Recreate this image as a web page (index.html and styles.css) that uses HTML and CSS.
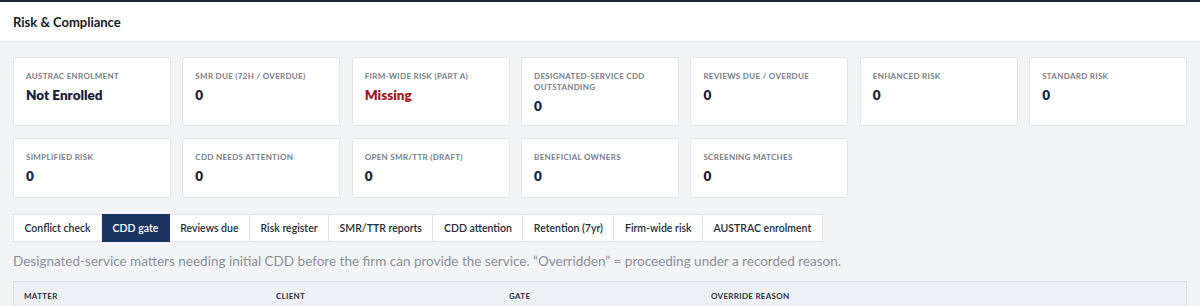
FILE: index.html
```html
<!DOCTYPE html>
<html lang="en">
<head>
    <meta charset="UTF-8">
    <meta name="viewport" content="width=device-width, initial-scale=1.0">
    <title>Risk &amp; Compliance</title>
    <link rel="stylesheet" href="styles.css">
</head>
<body>

<div class="page-header">
    <h1>Risk &amp; Compliance</h1>
</div>

<div class="content">
    <div class="stats">
        <div class="stat-card">
            <div class="stat-label">AUSTRAC enrolment</div>
            <div class="stat-value">Not Enrolled</div>
        </div>
        <div class="stat-card">
            <div class="stat-label">SMR due (72h / overdue)</div>
            <div class="stat-value">0</div>
        </div>
        <div class="stat-card">
            <div class="stat-label">Firm-wide risk (Part A)</div>
            <div class="stat-value danger">Missing</div>
        </div>
        <div class="stat-card">
            <div class="stat-label">Designated-service CDD outstanding</div>
            <div class="stat-value">0</div>
        </div>
        <div class="stat-card">
            <div class="stat-label">Reviews due / overdue</div>
            <div class="stat-value">0</div>
        </div>
        <div class="stat-card">
            <div class="stat-label">Enhanced risk</div>
            <div class="stat-value">0</div>
        </div>
        <div class="stat-card">
            <div class="stat-label">Standard risk</div>
            <div class="stat-value">0</div>
        </div>
        <div class="stat-card short">
            <div class="stat-label">Simplified risk</div>
            <div class="stat-value">0</div>
        </div>
        <div class="stat-card short">
            <div class="stat-label">CDD needs attention</div>
            <div class="stat-value">0</div>
        </div>
        <div class="stat-card short">
            <div class="stat-label">Open SMR/TTR (draft)</div>
            <div class="stat-value">0</div>
        </div>
        <div class="stat-card short">
            <div class="stat-label">Beneficial owners</div>
            <div class="stat-value">0</div>
        </div>
        <div class="stat-card short">
            <div class="stat-label">Screening matches</div>
            <div class="stat-value">0</div>
        </div>
    </div>

    <div class="tabs">
        <button class="tab">Conflict check</button>
        <button class="tab active">CDD gate</button>
        <button class="tab">Reviews due</button>
        <button class="tab">Risk register</button>
        <button class="tab">SMR/TTR reports</button>
        <button class="tab">CDD attention</button>
        <button class="tab">Retention (7yr)</button>
        <button class="tab">Firm-wide risk</button>
        <button class="tab">AUSTRAC enrolment</button>
    </div>

    <p class="hint">Designated-service matters needing initial CDD before the firm can provide the service. &ldquo;Overridden&rdquo; = proceeding under a recorded reason.</p>

    <table class="gate-table">
        <thead>
            <tr>
                <th class="col-matter">Matter</th>
                <th class="col-client">Client</th>
                <th class="col-gate">Gate</th>
                <th>Override reason</th>
            </tr>
        </thead>
    </table>
</div>

</body>
</html>
```

FILE: styles.css
```css
body {
    margin: 0;
    font-family: Lato, "DejaVu Sans", Arial, sans-serif;
    background-color: #f3f4f6;
    color: #1b2233;
}
.page-header {
    background-color: #fff;
    border-top: 2px solid #1b2238;
    border-bottom: 1px solid #e2e5ea;
    height: 39px;
    padding: 0 13px;
    display: flex;
    align-items: center;
}
.page-header h1 {
    margin: 0;
    font-size: 13px;
    font-weight: bold;
    color: #151a26;
}
.content {
    padding: 15px 13px 0;
}
.stats {
    display: grid;
    grid-template-columns: repeat(7, 1fr);
    gap: 12px 11.5px;
}
.stat-card {
    background-color: #fff;
    border: 1px solid #e1e4e9;
    border-radius: 3px;
    height: 69px;
    box-sizing: border-box;
    padding: 13px 12px 0;
}
.stat-card.short {
    height: 60px;
}
.stat-label {
    font-size: 8px;
    font-weight: bold;
    text-transform: uppercase;
    color: #767d8b;
    line-height: 11px;
    letter-spacing: 0.3px;
}
.stat-value {
    margin-top: 5px;
    font-size: 13.5px;
    font-weight: 800;
    color: #14213f;
}
.stat-value.danger {
    color: #a3191b;
}
.tabs {
    display: flex;
    margin-top: 16px;
}
.tabs .tab {
    font-family: inherit;
    font-size: 10.5px;
    font-weight: 600;
    color: #252b38;
    background-color: #fff;
    border: 1px solid #e1e4e9;
    border-left: none;
    height: 28px;
    padding: 0 10.5px;
    cursor: pointer;
}
.tabs .tab:first-child {
    border-left: 1px solid #e1e4e9;
}
.tabs .tab.active {
    background-color: #1c3461;
    border-color: #1c3461;
    color: #fff;
}
.hint {
    margin: 11px 0 0;
    font-size: 13.5px;
    color: #8a909a;
}
.gate-table {
    width: 100%;
    margin-top: 12px;
    border-collapse: collapse;
}
.gate-table th {
    background-color: #edf1f6;
    border-top: 1px solid #dde1e7;
    text-align: left;
    font-size: 8px;
    font-weight: bold;
    letter-spacing: 0.3px;
    text-transform: uppercase;
    color: #2a3142;
    padding: 9px 10px;
}
.gate-table th:first-child {
    border-left: 1px solid #dde1e7;
}
.gate-table th:last-child {
    border-right: 1px solid #dde1e7;
}
.col-matter { width: 232px; }
.col-client { width: 213px; }
.col-gate { width: 182px; }
```
